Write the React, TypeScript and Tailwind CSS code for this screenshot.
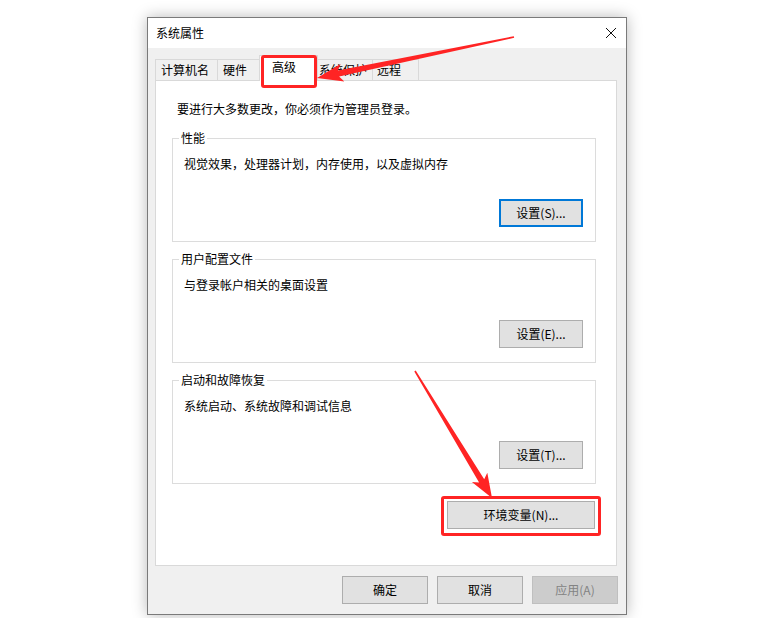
import React from "react";

type Pt = [number, number];

// polygon for a tapered annotation arrow, tail -> tip
function arrowPoints(tail: Pt, tip: Pt, headLen = 22, headHalf = 9, neckHalf = 3, tailHalf = 0.8) {
  const dx = tip[0] - tail[0];
  const dy = tip[1] - tail[1];
  const len = Math.hypot(dx, dy);
  const ux = dx / len;
  const uy = dy / len;
  const nx = -uy;
  const ny = ux;
  const bx = tip[0] - ux * headLen;
  const by = tip[1] - uy * headLen;
  const wx = bx - ux * 4;
  const wy = by - uy * 4;
  const pts: Pt[] = [
    [tail[0] + nx * tailHalf, tail[1] + ny * tailHalf],
    [bx + nx * neckHalf, by + ny * neckHalf],
    [wx + nx * headHalf, wy + ny * headHalf],
    tip,
    [wx - nx * headHalf, wy - ny * headHalf],
    [bx - nx * neckHalf, by - ny * neckHalf],
    [tail[0] - nx * tailHalf, tail[1] - ny * tailHalf],
  ];
  return pts.map((p) => `${p[0].toFixed(1)},${p[1].toFixed(1)}`).join(" ");
}

function WinButton({
  label,
  className = "",
  focused = false,
  disabled = false,
}: {
  label: string;
  className?: string;
  focused?: boolean;
  disabled?: boolean;
}) {
  const look = disabled
    ? "bg-[#cccccc] border border-[#bfbfbf] text-[#838383]"
    : focused
    ? "bg-[#e1e1e1] border-2 border-[#0078d7] text-black"
    : "bg-[#e1e1e1] border border-[#adadad] text-black";
  return (
    <div className={`flex items-center justify-center text-[12px] leading-none ${look} ${className}`}>
      {label}
    </div>
  );
}

function GroupBox({
  title,
  desc,
  button,
  focused = false,
  className = "",
}: {
  title: string;
  desc: string;
  button: string;
  focused?: boolean;
  className?: string;
}) {
  return (
    <div className={`relative ml-[16px] w-[424px] h-[104px] border border-[#dcdcdc] ${className}`}>
      <span className="absolute left-[6px] -top-[9px] bg-white px-[2px] text-[12px] leading-[16px]">
        {title}
      </span>
      <div className="pt-[17px] pl-[11px] text-[12px] leading-[16px]">{desc}</div>
      <div className="flex justify-end pr-[12px] mt-[27px]">
        <WinButton label={button} focused={focused} className="w-[84px] h-[28px]" />
      </div>
    </div>
  );
}

export default function App() {
  return (
    <div className="relative w-[780px] h-[618px] bg-white overflow-hidden font-['Microsoft_YaHei','Noto_Sans_CJK_SC',sans-serif] text-black">
      <div className="pt-[17px] pl-[147px]">
        {/* dialog window */}
        <div className="w-[480px] h-[598px] border border-[#7a7a7a] bg-[#f0f0f0] shadow-[0_0_14px_rgba(0,0,0,0.28)] flex flex-col">
          {/* title bar */}
          <div className="h-[30px] bg-white flex items-center justify-between pl-[8px] pr-[8px]">
            <span className="text-[12px] leading-[16px]">系统属性</span>
            <svg width="12" height="12" viewBox="0 0 12 12" className="mr-[1px]">
              <path d="M1 1 L11 11 M11 1 L1 11" stroke="#111" strokeWidth="1" fill="none" />
            </svg>
          </div>

          {/* tab strip */}
          <div className="flex items-end pl-[7px] pt-[8px] h-[33px] text-[12px]">
            <div className="h-[22px] w-[63px] border border-[#d9d9d9] pl-[5px] leading-[20px]">计算机名</div>
            <div className="h-[22px] w-[44px] border border-l-0 border-[#d9d9d9] pl-[5px] leading-[20px]">硬件</div>
            <div className="relative z-10 -ml-[3px] h-[26px] w-[59px] border border-b-0 border-[#d9d9d9] bg-white pl-[12px] leading-[20px] pt-[1px]">
              高级
            </div>
            <div className="-ml-[1px] h-[22px] w-[56px] border border-l-0 border-[#d9d9d9] pl-[2px] leading-[20px]">系统保护</div>
            <div className="h-[22px] w-[46px] border border-l-0 border-[#d9d9d9] pl-[4px] leading-[20px]">远程</div>
          </div>

          {/* tab page */}
          <div className="-mt-px ml-[7px] w-[462px] h-[486px] border border-[#d9d9d9] bg-white">
            <p className="mt-[20px] ml-[21px] text-[12px] leading-[16px]">要进行大多数更改，你必须作为管理员登录。</p>
            <GroupBox
              className="mt-[21px]"
              title="性能"
              desc="视觉效果，处理器计划，内存使用，以及虚拟内存"
              button="设置(S)..."
              focused
            />
            <GroupBox
              className="mt-[17px]"
              title="用户配置文件"
              desc="与登录帐户相关的桌面设置"
              button="设置(E)..."
            />
            <GroupBox
              className="mt-[17px]"
              title="启动和故障恢复"
              desc="系统启动、系统故障和调试信息"
              button="设置(T)..."
            />
            <div className="flex justify-end pr-[21px] mt-[17px]">
              <WinButton label="环境变量(N)..." className="w-[148px] h-[28px]" />
            </div>
          </div>

          {/* dialog buttons */}
          <div className="flex justify-end gap-[9px] pr-[8px] mt-[10px]">
            <WinButton label="确定" className="w-[86px] h-[28px]" />
            <WinButton label="取消" className="w-[86px] h-[28px]" />
            <WinButton label="应用(A)" disabled className="w-[86px] h-[28px]" />
          </div>
        </div>
      </div>

      {/* red annotation marks */}
      <div className="absolute z-20 left-[261px] top-[55px] w-[56px] h-[33px] border-[3px] border-[#ff2424] rounded-[3px]" />
      <div className="absolute z-20 left-[441px] top-[496px] w-[160px] h-[40px] border-[3px] border-[#ff2424] rounded-[3px]" />
      <svg className="absolute z-20 left-0 top-0 pointer-events-none" width="780" height="618">
        <polygon points={arrowPoints([514, 37], [317, 78])} fill="#ff2424" />
        <polygon points={arrowPoints([415, 371], [492, 498], 20, 9, 3, 0.8)} fill="#ff2424" />
      </svg>
    </div>
  );
}
